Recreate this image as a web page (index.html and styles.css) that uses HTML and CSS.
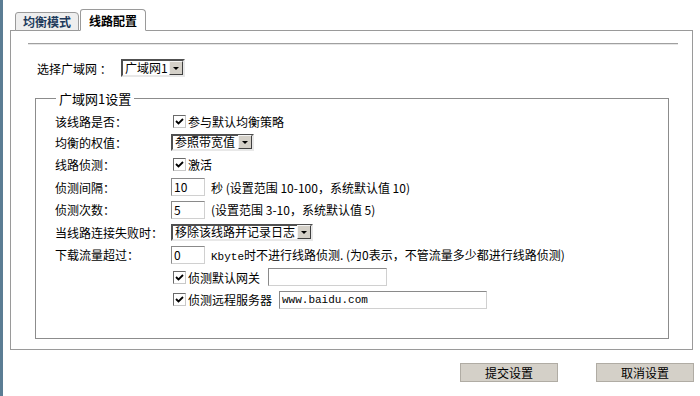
FILE: index.html
```html
<!DOCTYPE html>
<html lang="zh-CN">
<head>
    <meta charset="UTF-8">
    <meta name="viewport" content="width=device-width, initial-scale=1.0">
    <title>线路配置</title>
    <link rel="stylesheet" href="styles.css">
</head>
<body>
    <div class="tabs">
        <div class="tab">均衡模式</div>
        <div class="tab tab-active">线路配置</div>
    </div>

    <div class="panel">
        <div class="rule"></div>

        <div class="wan-select">
            <span class="wan-label">选择广域网 ：</span>
            <span class="select select-wan"><span class="select-text">广域网1</span><span class="select-arrow"></span></span>
        </div>

        <fieldset class="group">
            <legend class="group-title">广域网1设置</legend>

            <div class="row row-first">
                <span class="label">该线路是否：</span>
                <span class="check"><svg width="11" height="11" viewBox="0 0 11 11"><path d="M2 5 L4.5 7.5 L9 3" fill="none" stroke="#000" stroke-width="1.8"/></svg></span>
                <span class="text">参与默认均衡策略</span>
            </div>
            <div class="row">
                <span class="label">均衡的权值：</span>
                <span class="select select-weight"><span class="select-text">参照带宽值</span><span class="select-arrow"></span></span>
            </div>
            <div class="row">
                <span class="label">线路侦测：</span>
                <span class="check"><svg width="11" height="11" viewBox="0 0 11 11"><path d="M2 5 L4.5 7.5 L9 3" fill="none" stroke="#000" stroke-width="1.8"/></svg></span>
                <span class="text">激活</span>
            </div>
            <div class="row">
                <span class="label">侦测间隔：</span>
                <span class="input input-short">10</span>
                <span class="hint">秒 (设置范围 10-100，系统默认值 10)</span>
            </div>
            <div class="row">
                <span class="label">侦测次数：</span>
                <span class="input input-short">5</span>
                <span class="hint">(设置范围 3-10，系统默认值 5)</span>
            </div>
            <div class="row">
                <span class="label">当线路连接失败时：</span>
                <span class="select select-fail"><span class="select-text">移除该线路并记录日志</span><span class="select-arrow"></span></span>
            </div>
            <div class="row">
                <span class="label">下载流量超过：</span>
                <span class="input input-short">0</span>
                <span class="hint"><span class="mono">Kbyte</span>时不进行线路侦测. (为0表示，不管流量多少都进行线路侦测)</span>
            </div>
            <div class="row">
                <span class="label"></span>
                <span class="check"><svg width="11" height="11" viewBox="0 0 11 11"><path d="M2 5 L4.5 7.5 L9 3" fill="none" stroke="#000" stroke-width="1.8"/></svg></span>
                <span class="text">侦测默认网关</span>
                <span class="input input-gateway"></span>
            </div>
            <div class="row">
                <span class="label"></span>
                <span class="check"><svg width="11" height="11" viewBox="0 0 11 11"><path d="M2 5 L4.5 7.5 L9 3" fill="none" stroke="#000" stroke-width="1.8"/></svg></span>
                <span class="text">侦测远程服务器</span>
                <span class="input input-server">www.baidu.com</span>
            </div>
        </fieldset>
    </div>

    <div class="actions">
        <button class="btn">提交设置</button>
        <button class="btn">取消设置</button>
    </div>
</body>
</html>
```

FILE: styles.css
```css
body {
    font-family: "Noto Sans CJK SC", "Liberation Sans", sans-serif;
    font-size: 12px;
    color: #000;
    margin: 0;
    min-height: 396px;
    background: #fff;
    border-left: 3px solid #5b7d94;
    box-sizing: border-box;
}

.tabs {
    display: flex;
    align-items: flex-end;
    padding: 9px 0 0 12px;
    margin-bottom: -1px;
    position: relative;
    z-index: 1;
}

.tab {
    width: 62px;
    height: 17px;
    line-height: 17px;
    text-align: center;
    font-weight: 700;
    color: #1d3a5c;
    background: #eeeeee;
    border: 1px solid #9a9a9a;
    border-radius: 3px 4px 0 0;
    margin-right: 1px;
}

.tab-active {
    width: 64px;
    height: 20px;
    line-height: 21px;
    color: #000;
    background: #fff;
    border-bottom-color: #fff;
}

.panel {
    margin: 0 7px 0 7px;
    height: 320px;
    border: 1px solid #9a9a9a;
    box-sizing: border-box;
}

.rule {
    margin: 12px 14px 0 17px;
    border-top: 1px solid #a0a0a0;
    border-bottom: 1px solid #e6e6e6;
}

.wan-select {
    display: flex;
    align-items: center;
    height: 18px;
    margin-top: 14px;
    padding-left: 26px;
}

.wan-label {
    width: 84px;
}

.select {
    display: inline-flex;
    align-items: center;
    box-sizing: border-box;
    height: 18px;
    background: #fff;
    border: 2px solid;
    border-color: #505050 #e8e8e8 #e8e8e8 #505050;
    padding-left: 2px;
}

.select-text {
    flex: 1;
    line-height: 14px;
    white-space: nowrap;
}

.select-arrow {
    width: 14px;
    height: 14px;
    flex-shrink: 0;
    background: #d4d0c8;
    box-sizing: border-box;
    border: 1px solid;
    border-color: #f4f4f4 #404040 #404040 #f4f4f4;
    position: relative;
}

.select-arrow::after {
    content: "";
    position: absolute;
    left: 3px;
    top: 5px;
    border-left: 3px solid transparent;
    border-right: 3px solid transparent;
    border-top: 3px solid #000;
}

.select-wan { width: 64px; }
.select-weight { width: 83px; height: 17px; }
.select-fail { width: 142px; height: 17px; }

.group {
    margin: 12px 23px 0 24px;
    padding: 0 0 27px 19px;
    border: 1px solid #8c8c8c;
    height: 250px;
    box-sizing: border-box;
}

.group-title {
    padding: 0 3px;
    margin-left: 1px;
    font-size: 13px;
}

.row {
    display: flex;
    align-items: center;
    height: 22.5px;
}

.row-first {
    height: 19px;
    margin-top: 4px;
}

.label {
    width: 116px;
    flex-shrink: 0;
    white-space: nowrap;
}

.check {
    width: 13px;
    height: 13px;
    box-sizing: border-box;
    margin-left: 2px;
    border: 1px solid;
    border-color: #6a6a6a #c8c8c8 #c8c8c8 #6a6a6a;
    background: #fff;
    display: flex;
    align-items: center;
    justify-content: center;
}

.text {
    margin-left: 2px;
    white-space: nowrap;
}

.input {
    box-sizing: border-box;
    height: 18px;
    line-height: 16px;
    padding-left: 2px;
    border: 1px solid;
    border-color: #8a8a8a #d0d0d0 #d0d0d0 #8a8a8a;
    background: #fff;
    white-space: nowrap;
}

.input-short { width: 34px; }

.input-gateway {
    width: 119px;
    margin-left: 8px;
}

.input-server {
    width: 208px;
    margin-left: 7px;
    font-family: "Liberation Mono", monospace;
    font-size: 11px;
}

.hint {
    margin-left: 6px;
    white-space: nowrap;
}

.mono {
    font-family: "Liberation Mono", monospace;
    font-size: 11px;
}

.actions {
    display: flex;
    justify-content: flex-end;
    gap: 38px;
    margin-top: 13px;
    padding-right: 6px;
}

.btn {
    width: 98px;
    height: 19px;
    padding: 0;
    font-family: "Noto Sans CJK SC", sans-serif;
    font-size: 12px;
    line-height: 17px;
    color: #000;
    background: #d4d0c8;
    border: 1px solid #b0aca4;
}
```
